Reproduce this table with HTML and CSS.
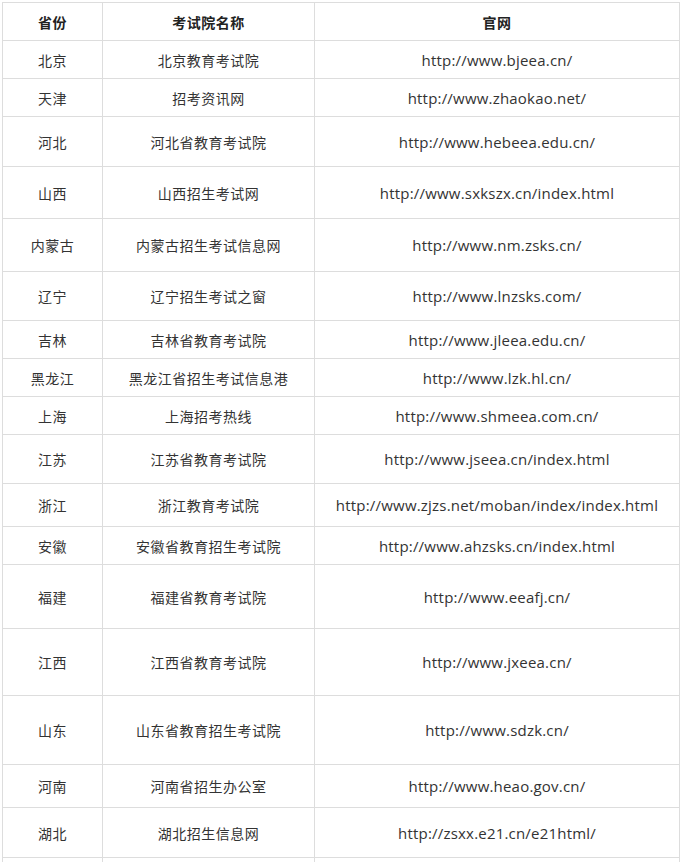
FILE: index.html
```html
<!DOCTYPE html>
<html lang="zh-CN">
<head>
<meta charset="utf-8">
<title>各省考试院官网</title>
<link rel="stylesheet" href="styles.css">
</head>
<body>
<table class="sites">
  <colgroup>
    <col class="c-prov">
    <col class="c-name">
    <col class="c-url">
  </colgroup>
  <thead>
    <tr class="h38"><th>省份</th><th>考试院名称</th><th>官网</th></tr>
  </thead>
  <tbody>
    <tr class="h38"><td>北京</td><td>北京教育考试院</td><td class="url">http://www.bjeea.cn/</td></tr>
    <tr class="h38"><td>天津</td><td>招考资讯网</td><td class="url">http://www.zhaokao.net/</td></tr>
    <tr class="h50"><td>河北</td><td>河北省教育考试院</td><td class="url">http://www.hebeea.edu.cn/</td></tr>
    <tr class="h52"><td>山西</td><td>山西招生考试网</td><td class="url">http://www.sxkszx.cn/index.html</td></tr>
    <tr class="h53"><td>内蒙古</td><td>内蒙古招生考试信息网</td><td class="url">http://www.nm.zsks.cn/</td></tr>
    <tr class="h49"><td>辽宁</td><td>辽宁招生考试之窗</td><td class="url">http://www.lnzsks.com/</td></tr>
    <tr class="h38"><td>吉林</td><td>吉林省教育考试院</td><td class="url">http://www.jleea.edu.cn/</td></tr>
    <tr class="h38"><td>黑龙江</td><td>黑龙江省招生考试信息港</td><td class="url">http://www.lzk.hl.cn/</td></tr>
    <tr class="h38"><td>上海</td><td>上海招考热线</td><td class="url">http://www.shmeea.com.cn/</td></tr>
    <tr class="h49"><td>江苏</td><td>江苏省教育考试院</td><td class="url">http://www.jseea.cn/index.html</td></tr>
    <tr class="h43"><td>浙江</td><td>浙江教育考试院</td><td class="url">http://www.zjzs.net/moban/index/index.html</td></tr>
    <tr class="h38"><td>安徽</td><td>安徽省教育招生考试院</td><td class="url">http://www.ahzsks.cn/index.html</td></tr>
    <tr class="h64"><td>福建</td><td>福建省教育考试院</td><td class="url">http://www.eeafj.cn/</td></tr>
    <tr class="h67"><td>江西</td><td>江西省教育考试院</td><td class="url">http://www.jxeea.cn/</td></tr>
    <tr class="h69"><td>山东</td><td>山东省教育招生考试院</td><td class="url">http://www.sdzk.cn/</td></tr>
    <tr class="h43"><td>河南</td><td>河南省招生办公室</td><td class="url">http://www.heao.gov.cn/</td></tr>
    <tr class="h50"><td>湖北</td><td>湖北招生信息网</td><td class="url">http://zsxx.e21.cn/e21html/</td></tr>
    <tr class="h50"><td>湖南</td><td>湖南招生考试信息港</td><td class="url">http://www.hneeb.cn/</td></tr>
  </tbody>
</table>
</body>
</html>
```
FILE: styles.css
```css
html, body {
  margin: 0;
  padding: 0;
  background: #ffffff;
}

body {
  padding: 2px 0 0 2px;
  font-family: "Noto Sans CJK SC", "Open Sans", sans-serif;
  color: #333333;
}

.sites {
  border-collapse: collapse;
  table-layout: fixed;
  width: 677px;
  font-size: 14px;
}

.c-prov { width: 100px; }
.c-name { width: 212px; }
.c-url { width: 365px; }

.sites th,
.sites td {
  border: 1px solid #dddddd;
  padding: 0;
  text-align: center;
  vertical-align: middle;
  line-height: 20px;
  letter-spacing: 0.5px;
}

.sites th {
  font-weight: bold;
  color: #222222;
}

.sites td.url {
  font-family: "Open Sans", "Noto Sans", sans-serif;
  font-size: 15px;
  letter-spacing: 0.2px;
}

.h38 td, .h38 th { height: 37px; }
.h43 td { height: 42px; }
.h49 td { height: 48px; }
.h50 td { height: 49px; }
.h52 td { height: 51px; }
.h53 td { height: 52px; }
.h64 td { height: 63px; }
.h67 td { height: 66px; }
.h69 td { height: 68px; }
```
